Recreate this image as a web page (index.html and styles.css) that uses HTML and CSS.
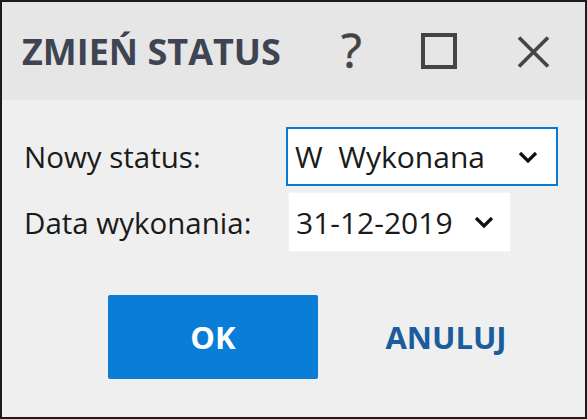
FILE: index.html
```html
<!DOCTYPE html>
<html lang="pl">
<head>
<meta charset="UTF-8" />
<meta name="viewport" content="width=device-width, initial-scale=1" />
<title>Zmień status</title>
<link rel="stylesheet" href="styles.css">
</head>
<body>
  <div class="dialog">
    <div class="titlebar">
      <h1 class="title">ZMIEŃ STATUS</h1>
      <div class="controls">
        <span class="ctl help">?</span>
        <span class="ctl max">
          <svg width="36" height="36" viewBox="0 0 36 36"><rect x="2" y="2" width="32" height="32" fill="none" stroke="#444" stroke-width="4"/></svg>
        </span>
        <span class="ctl close">
          <svg width="33" height="32" viewBox="0 0 33 32"><path d="M2 1.5 L31 30.5 M31 1.5 L2 30.5" stroke="#444" stroke-width="3.6" fill="none"/></svg>
        </span>
      </div>
    </div>

    <div class="content">
      <div class="form">
        <label class="label">Nowy status:</label>
        <div class="combo focused">
          <span class="value">W&nbsp;&nbsp;Wykonana</span>
          <svg class="chev" width="20" height="12" viewBox="0 0 20 12"><path d="M2 2 L10 10 L18 2" stroke="#111" stroke-width="3.2" fill="none"/></svg>
        </div>

        <label class="label">Data wykonania:</label>
        <div class="combo date">
          <span class="value">31-12-2019</span>
          <svg class="chev" width="20" height="12" viewBox="0 0 20 12"><path d="M2 2 L10 10 L18 2" stroke="#111" stroke-width="3.2" fill="none"/></svg>
        </div>
      </div>

      <div class="buttons">
        <button class="btn primary">OK</button>
        <button class="btn link">ANULUJ</button>
      </div>
    </div>
  </div>
</body>
</html>
```

FILE: styles.css
```css
body {
  margin: 0;
  background: #efefef;
  font-family: "Open Sans", "Noto Sans", sans-serif;
  color: #1a1a1a;
}

.dialog {
  width: 587px;
  height: 419px;
  box-sizing: border-box;
  border: 2px solid #1b1b1b;
  background: #efefef;
  display: flex;
  flex-direction: column;
}

/* Pasek tytułu */
.titlebar {
  height: 98px;
  background: #e6e6e6;
  display: flex;
  align-items: center;
  padding-left: 20px;
  box-sizing: border-box;
}

.title {
  margin: 0;
  font-size: 36px;
  font-weight: 700;
  color: #3f4452;
  line-height: 1;
  padding-top: 2px;
}

.controls {
  display: flex;
  align-items: center;
}

.ctl {
  display: flex;
  align-items: center;
  justify-content: center;
  color: #444;
}

.ctl svg {
  display: block;
}

.help {
  font-size: 48px;
  font-weight: 400;
  line-height: 1;
  margin-left: 60px;
  padding-bottom: 2px;
  -webkit-text-stroke: 0.6px #444;
}

.max {
  margin-left: 59px;
}

.close {
  margin-left: 60px;
  padding-top: 2px;
}

/* Formularz */
.content {
  padding: 27px 0 0 20px;
}

.form {
  display: grid;
  grid-template-columns: 264px auto;
  row-gap: 6px;
  align-items: center;
}

.label {
  font-size: 29.5px;
  padding-left: 2px;
}

.combo {
  display: flex;
  align-items: center;
  justify-content: space-between;
  height: 59px;
  box-sizing: border-box;
  background: #fff;
  padding: 0 18px 0 7px;
  font-size: 30px;
}

.focused {
  width: 272px;
  border: 2px solid #0a78d6;
}

.date {
  width: 223px;
  margin-left: 2px;
  height: 60px;
  padding-right: 16px;
  border: 1px solid #f4f4f4;
}

.chev {
  display: block;
}

/* Przyciski */
.buttons {
  display: flex;
  gap: 23px;
  margin: 43px 0 0 86px;
}

.btn {
  width: 210px;
  height: 84px;
  border: none;
  border-radius: 2px;
  font-family: "Open Sans", "Noto Sans", sans-serif;
  font-size: 31px;
  font-weight: 700;
  cursor: pointer;
}

.primary {
  background: #0a7dd6;
  color: #fff;
}

.link {
  background: transparent;
  color: #1a5c9c;
}
```
